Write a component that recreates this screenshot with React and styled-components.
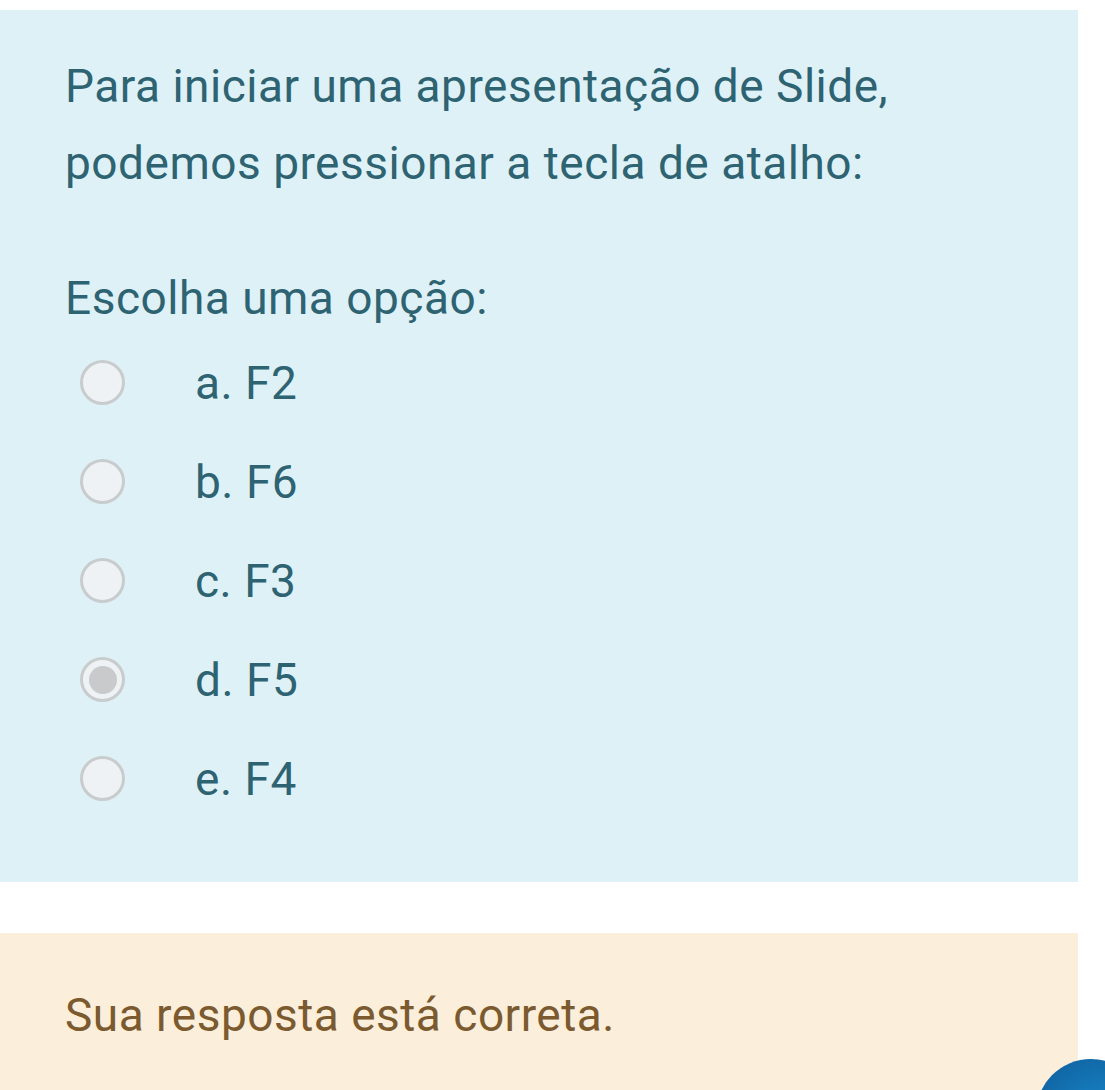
import React from 'react';
import styled, { createGlobalStyle } from 'styled-components';

const Global = createGlobalStyle`
  html, body {
    margin: 0;
    padding: 0;
    background: #ffffff;
    overflow: hidden;
  }
  body {
    font-family: Roboto, "Noto Sans", sans-serif;
  }
`;

const Page = styled.div`
  position: relative;
  width: 1105px;
  height: 1090px;
  padding-top: 10px;
  box-sizing: border-box;
  overflow: hidden;
`;

const QuestionPanel = styled.div`
  width: 1078px;
  height: 872px;
  box-sizing: border-box;
  background: #def1f7;
  padding: 38px 0 0 65px;
  color: #2e6372;
`;

const Text = styled.p`
  margin: ${(p) => p.$gap || 0}px 0 0;
  font-size: 46px;
  line-height: 77px;
  letter-spacing: 0.5px;
`;

const Options = styled.div`
  display: flex;
  flex-direction: column;
  margin-top: -4px;
`;

const Option = styled.label`
  display: flex;
  align-items: center;
  height: 99px;
  font-size: 46px;
  letter-spacing: 0.5px;
`;

const Radio = styled.span`
  width: 45px;
  height: 45px;
  margin-left: 15px;
  margin-right: 70px;
  border-radius: 50%;
  box-sizing: border-box;
  border: 3px solid #c9cccd;
  background: #eef2f5;
  display: flex;
  align-items: center;
  justify-content: center;
  flex-shrink: 0;

  &::after {
    content: '';
    display: ${(p) => (p.$checked ? 'block' : 'none')};
    width: 28px;
    height: 28px;
    border-radius: 50%;
    background: #c8cacc;
  }
`;

const Feedback = styled.div`
  width: 1078px;
  height: 200px;
  margin-top: 51px;
  box-sizing: border-box;
  background: #fbeedb;
  padding: 44px 0 0 65px;
  color: #7a5a2e;
  font-size: 46px;
  line-height: 77px;
  letter-spacing: 0.5px;
`;

const Fab = styled.div`
  position: absolute;
  left: 1036px;
  top: 1059px;
  width: 110px;
  height: 110px;
  border-radius: 50%;
  background: radial-gradient(circle at 65% 65%, #1a8fd0, #0e5b9a);
`;

const options = [
  { key: 'a', label: 'F2' },
  { key: 'b', label: 'F6' },
  { key: 'c', label: 'F3' },
  { key: 'd', label: 'F5', checked: true },
  { key: 'e', label: 'F4' },
];

export default function App() {
  return (
    <Page>
      <Global />
      <QuestionPanel>
        <Text>
          Para iniciar uma apresentação de Slide,
          <br />
          podemos pressionar a tecla de atalho:
        </Text>
        <Text $gap={58}>Escolha uma opção:</Text>
        <Options>
          {options.map((o) => (
            <Option key={o.key}>
              <Radio $checked={o.checked} />
              {o.key}. {o.label}
            </Option>
          ))}
        </Options>
      </QuestionPanel>
      <Feedback>Sua resposta está correta.</Feedback>
      <Fab />
    </Page>
  );
}
